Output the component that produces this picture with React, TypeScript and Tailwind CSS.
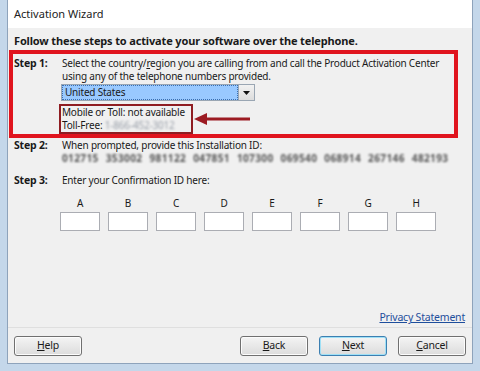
export default function App() {
  const letters = ["A", "B", "C", "D", "E", "F", "G", "H"];
  return (
    <div className="w-[480px] h-[371px] bg-[#c4d7ea] flex flex-col px-[7px] pb-[7px] [font-family:'Noto_Sans',sans-serif] text-[10px] tracking-[-0.2px] text-[#1a1a1a] overflow-hidden">
      <div className="flex-1 flex flex-col border-x border-b border-[#8ea3bb] bg-[#f0f0f0]">
        <div className="h-[28px] bg-white flex items-center pl-[6px] text-[11px] tracking-normal text-[#222]">Activation Wizard</div>
        <div className="flex-1 flex flex-col px-[6px] pt-[6px]">
          <div className="font-bold text-[11px] tracking-[-0.15px] leading-[14px] whitespace-nowrap">Follow these steps to activate your software over the telephone.</div>
          <div className="mt-[2px] ml-[-5px] w-[449px] border-[4px] border-[#e0141e] pt-[3px] pb-0 pl-[1px]">
            <div className="flex">
              <div className="w-[48px] font-bold shrink-0 leading-[13px] text-[10.5px]">Step 1:</div>
              <div className="leading-[13px] whitespace-nowrap">
                Select the country/<span className="underline">r</span>egion you are calling from and call the Product Activation Center
                <br />using any of the telephone numbers provided.
              </div>
            </div>
            <div className="ml-[47px] mt-[1px] flex w-[194px] h-[17px] border border-[#9aa6b3] bg-white">
              <div className="flex-1 bg-[#99c9ff] border border-[#3a6fb0] border-dotted flex items-center pl-[2px] text-[#1a1a1a]">United States</div>
              <div className="w-[16px] border-l border-[#9aa6b3] bg-gradient-to-b from-[#f2f2f2] to-[#dcdcdc] flex items-center justify-center">
                <svg width="7" height="4" viewBox="0 0 7 4"><path d="M0 0h7L3.5 4z" fill="#111" /></svg>
              </div>
            </div>
            <div className="flex items-center mt-[3px] ml-[45px]">
              <div className="border-2 border-[#8f1d22] pl-[1px] pr-[6px] leading-[13px] whitespace-nowrap">
                <div>Mobile or Toll: not available</div>
                <div>
                  Toll-Free: <span className="text-[#9aa0aa] blur-[1px]">1-866-452-3012</span>
                </div>
              </div>
              <svg width="56" height="14" viewBox="0 0 56 14" className="ml-[1px]">
                <path d="M12 7H56" stroke="#9c1b22" strokeWidth="3" />
                <path d="M0 7L13 1V13Z" fill="#9c1b22" />
              </svg>
            </div>
          </div>
          <div className="flex mt-[1px] leading-[13px]">
            <div className="w-[48px] font-bold shrink-0 text-[10.5px]">Step 2:</div>
            <div>When prompted, provide this Installation ID:</div>
          </div>
          <div className="ml-[48px] font-bold text-[#555] blur-[1.1px] tracking-[0.4px] [word-spacing:4px] leading-[13px] whitespace-nowrap">
            012715 353002 981122 047851 107300 069540 068914 267146 482193
          </div>
          <div className="flex mt-[9px] leading-[13px]">
            <div className="w-[48px] font-bold shrink-0 text-[10.5px]">Step 3:</div>
            <div>Enter your Confirmation ID here:</div>
          </div>
          <div className="ml-[46px] mt-[10px] flex gap-[8px]">
            {letters.map((l) => (
              <div key={l} className="flex flex-col items-center w-[40px]">
                <div className="leading-[13px]">{l}</div>
                <div className="mt-[2px] w-[40px] h-[19px] bg-white border border-[#abadb3]" />
              </div>
            ))}
          </div>
          <div className="flex-1" />
          <div className="flex justify-end pr-[1px] pb-[1px]">
            <span className="text-[#1e4e9c] underline text-[10.5px]">Privacy Statement</span>
          </div>
        </div>
        <div className="border-t border-[#dfdfdf] flex items-center px-[6px] pt-[8px] pb-[7px] gap-[11px]">
          <Btn u="H" rest="elp" />
          <div className="flex-1" />
          <Btn u="B" rest="ack" />
          <Btn u="N" rest="ext" primary />
          <Btn u="C" rest="ancel" />
        </div>
      </div>
    </div>
  );
}

function Btn({ u, rest, primary }: { u: string; rest: string; primary?: boolean }) {
  return (
    <div
      className={
        "w-[68px] h-[20px] rounded-[3px] flex items-center justify-center text-[10.5px] bg-gradient-to-b from-[#f4f4f4] to-[#dcdcdc] border " +
        (primary ? "border-[#3c7fb1] shadow-[inset_0_0_0_1px_#9fe0f6]" : "border-[#707070] shadow-[inset_0_0_0_1px_#fcfcfc]")
      }
    >
      <span className="underline">{u}</span>
      {rest}
    </div>
  );
}
